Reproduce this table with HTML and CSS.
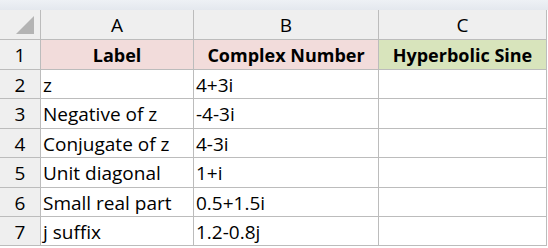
FILE: index.html
```html
<!DOCTYPE html>
<html>
<head>
<meta charset="utf-8">
<link rel="stylesheet" href="styles.css">
</head>
<body>
<div class="topband"></div>
<div class="sheet">
  <div class="corner"><span class="tri"></span></div>
  <div class="colhead">A</div>
  <div class="colhead">B</div>
  <div class="colhead">C</div>

  <div class="rowhead r1">1</div>
  <div class="cell hdr pink r1">Label</div>
  <div class="cell hdr pink r1">Complex Number</div>
  <div class="cell hdr green r1">Hyperbolic Sine</div>

  <div class="rowhead">2</div>
  <div class="cell">z</div>
  <div class="cell">4+3i</div>
  <div class="cell"></div>

  <div class="rowhead">3</div>
  <div class="cell">Negative of z</div>
  <div class="cell">-4-3i</div>
  <div class="cell"></div>

  <div class="rowhead">4</div>
  <div class="cell">Conjugate of z</div>
  <div class="cell">4-3i</div>
  <div class="cell"></div>

  <div class="rowhead">5</div>
  <div class="cell">Unit diagonal</div>
  <div class="cell">1+i</div>
  <div class="cell"></div>

  <div class="rowhead">6</div>
  <div class="cell">Small real part</div>
  <div class="cell">0.5+1.5i</div>
  <div class="cell"></div>

  <div class="rowhead">7</div>
  <div class="cell">j suffix</div>
  <div class="cell">1.2-0.8j</div>
  <div class="cell"></div>
</div>
</body>
</html>
```

FILE: styles.css
```css
html, body {
  margin: 0;
  padding: 0;
  background: #ffffff;
}
body {
  width: 548px;
  height: 248px;
  overflow: hidden;
  font-family: "Open Sans", Lato, sans-serif;
  font-size: 19px;
  color: #000000;
}
.topband {
  height: 10px;
  background: linear-gradient(#eef1f5, #e4e8ee);
}
.sheet {
  display: grid;
  grid-template-columns: 40px 152px 184px 167px;
  grid-template-rows: 29px 29px 28px 29px 28px 29px 28px 28px;
  gap: 1px;
  background: #bcbcbc;
  width: 547px;
  padding: 0 1px 1px 0;
  box-sizing: border-box;
}
.corner {
  background: #efefef;
  position: relative;
}
.tri {
  position: absolute;
  left: 16px;
  top: 6px;
  width: 0;
  height: 0;
  border-style: solid;
  border-width: 0 0 18px 18px;
  border-color: transparent transparent #b4b4b4 transparent;
}
.colhead {
  background: #efefef;
  display: flex;
  align-items: center;
  justify-content: center;
  padding-top: 1px;
}
.rowhead {
  background: #efefef;
  display: flex;
  align-items: center;
  justify-content: center;
  padding-top: 1px;
}
.cell {
  background: #ffffff;
  display: flex;
  align-items: center;
  padding-left: 2px;
  padding-top: 1px;
  white-space: nowrap;
  overflow: hidden;
}
.hdr {
  font-weight: bold;
  justify-content: center;
  padding-left: 0;
  font-size: 18px;
}
.pink {
  background: #f2dcdb;
}
.green {
  background: #d8e4bc;
}
```
